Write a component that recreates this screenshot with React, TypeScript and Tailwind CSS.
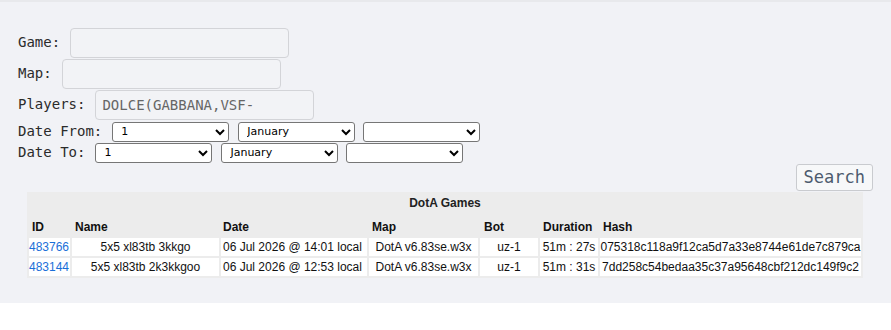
import React from 'react'

const games = [
  {
    id: '483766',
    name: '5x5 xl83tb 3kkgo',
    date: '06 Jul 2026 @ 14:01 local',
    map: 'DotA v6.83se.w3x',
    bot: 'uz-1',
    duration: '51m : 27s',
    hash: '075318c118a9f12ca5d7a33e8744e61de7c879ca',
  },
  {
    id: '483144',
    name: '5x5 xl83tb 2k3kkgoo',
    date: '06 Jul 2026 @ 12:53 local',
    map: 'DotA v6.83se.w3x',
    bot: 'uz-1',
    duration: '51m : 31s',
    hash: '7dd258c54bedaa35c37a95648cbf212dc149f9c2',
  },
]

const mono = "font-['DejaVu_Sans_Mono',monospace]"

function TextField({ label, value = '' }: { label: string; value?: string }) {
  return (
    <div className="flex items-center gap-[10px] h-[31px]">
      <span className={`${mono} text-[14px] text-[#2b2b2b]`}>{label}</span>
      <input
        readOnly
        value={value}
        className={`${mono} w-[219px] h-[30px] px-[6px] text-[14px] text-[#666] bg-[#f2f3f6] border border-[#d3d4d8] rounded-[4px] outline-none`}
      />
    </div>
  )
}

function DateSelects() {
  const sel =
    "w-[117px] h-[20px] bg-white border border-[#767676] rounded-[3px] text-[11px] font-['DejaVu_Sans',sans-serif] text-black pl-[4px]"
  return (
    <div className="flex items-center">
      <select className={sel} defaultValue="1">
        <option>1</option>
      </select>
      <select className={`${sel} ml-[9px]`} defaultValue="January">
        <option>January</option>
      </select>
      <select className={`${sel} ml-[8px]`} defaultValue="">
        <option value=""></option>
      </select>
    </div>
  )
}

export default function App() {
  return (
    <div className="w-[891px] h-[330px] bg-white">
      <div className="h-[303px] bg-[#f1f2f6] border-t-2 border-[#e8e9ec]">
        <div className="pl-[18px] pr-[18px] pt-[25px]">
          <TextField label="Game:" />
          <TextField label="Map:" />
          <TextField label="Players:" value="DOLCE(GABBANA,VSF-" />
          <div className="flex items-center gap-[10px] h-[21px] mt-[1px]">
            <span className={`${mono} text-[14px] text-[#2b2b2b]`}>Date From:</span>
            <DateSelects />
          </div>
          <div className="flex items-center gap-[10px] h-[21px]">
            <span className={`${mono} text-[14px] text-[#2b2b2b]`}>Date To:</span>
            <DateSelects />
          </div>
          <div className="flex justify-end mt-[1px]">
            <button
              className={`${mono} h-[27px] px-[7px] text-[17px] text-[#4d5b6e] bg-[#f7f8f9] border border-[#c9cbcf] rounded-[3px]`}
            >
              Search
            </button>
          </div>
        </div>

        <table className="mt-[1px] ml-[27px] w-[836px] bg-[#ececec] border-separate border-spacing-[2px] font-['Liberation_Sans',Arial,sans-serif] text-[12px] text-[#111]">
          <caption className="bg-[#ececec] h-[20px] leading-[20px] pt-[1px] font-bold text-[12px] text-[#222]">
            DotA Games
          </caption>
          <thead>
            <tr className="h-[22px] text-left font-bold">
              <th className="w-[41px] pl-[3px] pt-[3px]">ID</th>
              <th className="w-[147px] pl-[3px] pt-[3px]">Name</th>
              <th className="w-[146px] pl-[2px] pt-[3px]">Date</th>
              <th className="w-[109px] pl-[3px] pt-[3px]">Map</th>
              <th className="w-[58px] pl-[4px] pt-[3px]">Bot</th>
              <th className="w-[58px] pl-[3px] pt-[3px]">Duration</th>
              <th className="pl-[3px] pt-[3px]">Hash</th>
            </tr>
          </thead>
          <tbody>
            {games.map((g) => (
              <tr key={g.id} className="h-[18px]">
                <td className="bg-white px-0 text-[#1a6fd8]">{g.id}</td>
                <td className="bg-white text-center">{g.name}</td>
                <td className="bg-white pl-[2px]">{g.date}</td>
                <td className="bg-white text-center">{g.map}</td>
                <td className="bg-white text-center">{g.bot}</td>
                <td className="bg-white text-center">{g.duration}</td>
                <td className="bg-white text-center">{g.hash}</td>
              </tr>
            ))}
          </tbody>
        </table>
      </div>
    </div>
  )
}
